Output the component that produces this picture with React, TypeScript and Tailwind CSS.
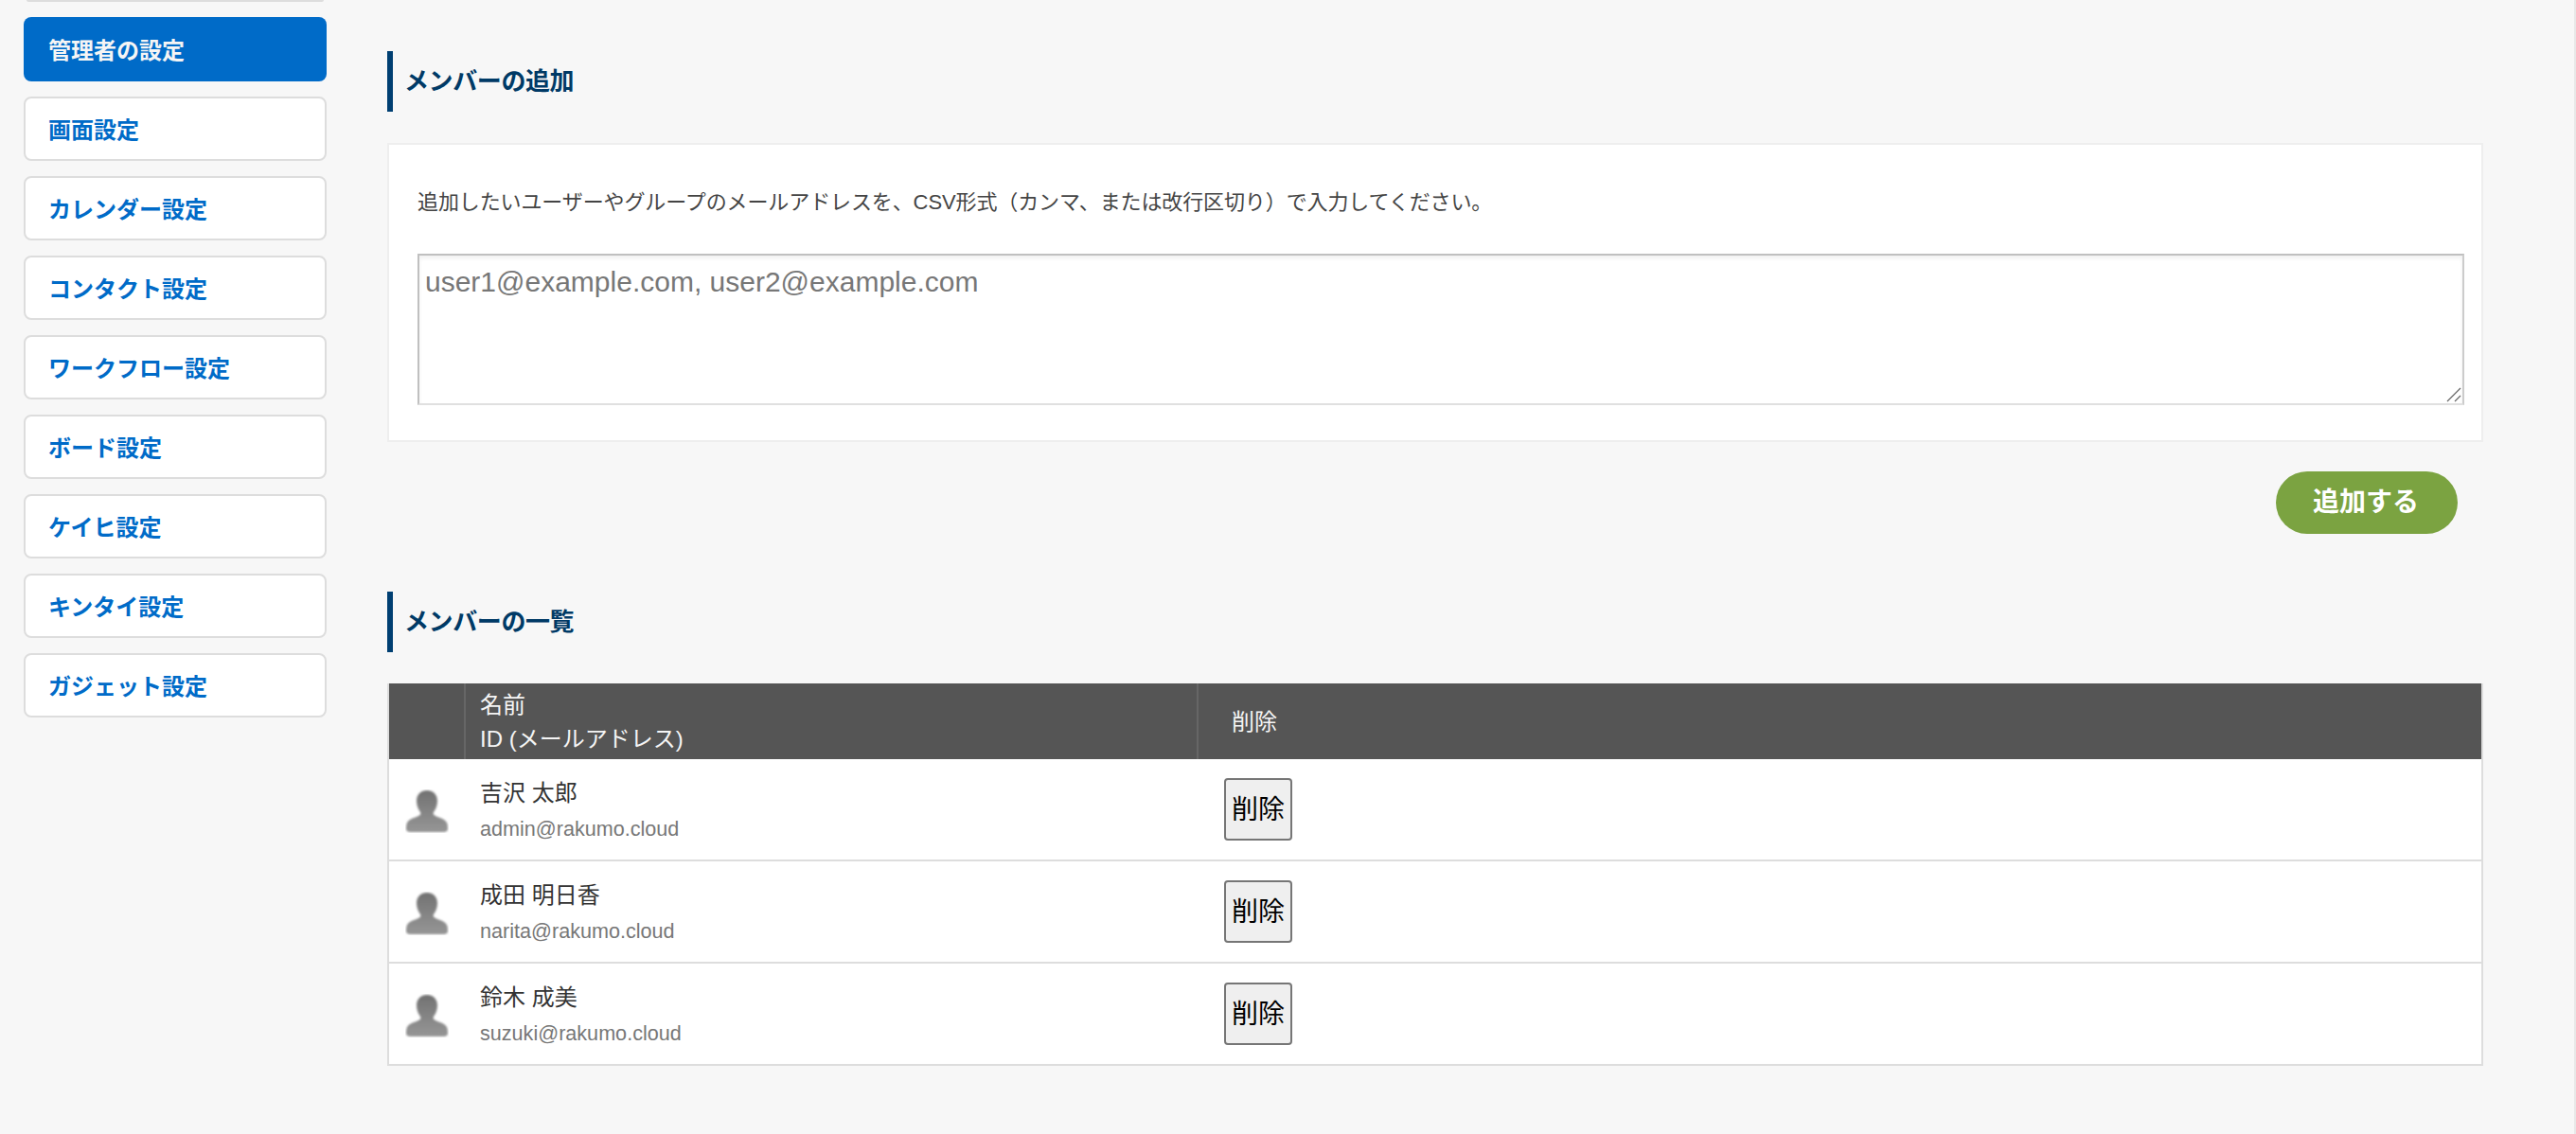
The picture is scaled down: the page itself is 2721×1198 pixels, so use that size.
const font = { fontFamily: '"Liberation Sans","Noto Sans CJK JP",sans-serif' };

const navItems = ["画面設定", "カレンダー設定", "コンタクト設定", "ワークフロー設定", "ボード設定", "ケイヒ設定", "キンタイ設定", "ガジェット設定"];
const members = [
  { name: "吉沢 太郎", email: "admin@rakumo.cloud" },
  { name: "成田 明日香", email: "narita@rakumo.cloud" },
  { name: "鈴木 成美", email: "suzuki@rakumo.cloud" },
];

function Avatar() {
  return (
    <svg width="46" height="46" viewBox="0 0 46 46">
      <defs>
        <linearGradient id="av" x1="0" y1="0" x2="0" y2="1">
          <stop offset="0" stopColor="#727272" />
          <stop offset="1" stopColor="#969696" />
        </linearGradient>
        <filter id="bl" x="-10%" y="-10%" width="120%" height="120%"><feGaussianBlur stdDeviation="0.8" /></filter>
      </defs>
      <path
        filter="url(#bl)"
        fill="url(#av)"
        d="M23 1c6.500 0 11 4.500 11 11 0 5-2 9.500-4 12-1 2 0 3 3 4.500 5 2 10 3 11.500 8 .6 2.500.5 6 .5 6-.5 1.500-2 2.500-4 2.500H5c-2 0-3.500-1-4-2.500 0 0-.1-3.500.5-6C3 31.500 8 30.500 13 28.500c3-1.500 4-2.500 3-4.500-2-2.500-4-7-4-12C12 5.500 16.500 1 23 1z"
      />
    </svg>
  );
}

function Heading({ children }: { children: React.ReactNode }) {
  return (
    <h2 className="h-16 border-l-[6px] border-[#003f72] pl-3 flex items-center text-[26px] font-bold text-[#003a66] tracking-[-0.4px]">
      {children}
    </h2>
  );
}

export default function App() {
  return (
    <div style={font} className="relative flex h-[1198px] overflow-hidden bg-[#f7f7f7] text-[#333]">
      <aside className="w-[409px] shrink-0 pl-[25px] pr-[64px]">
        <div className="h-0.5 mx-[3px] bg-[#dddddd] rounded-b" />
        <nav className="mt-4 flex flex-col gap-4">
          <a className="flex h-[68px] items-center rounded-lg bg-[#006bc8] px-[26px] pt-[3px] text-2xl font-bold text-[#f5f5f5]">管理者の設定</a>
          {navItems.map((item) => (
            <a key={item} className="flex h-[68px] items-center rounded-lg border-2 border-[#dddddd] bg-white px-6 pt-[3px] text-2xl font-bold text-[#006bc8]">
              {item}
            </a>
          ))}
        </nav>
      </aside>
      <main className="w-[2214px] shrink-0 pt-[54px]">
        <Heading>メンバーの追加</Heading>
        <section className="mt-[33px] h-[316px] border-2 border-[#eeeeee] bg-white pl-[30px] pr-[18px] pt-[45px]">
          <p className="text-[22px] leading-8 tracking-[-0.11px] text-[#444]">追加したいユーザーやグループのメールアドレスを、CSV形式（カンマ、または改行区切り）で入力してください。</p>
          <div className="relative mt-[38px]">
            <textarea
              className="block h-[160px] w-full resize-none border-2 border-t-[#c0c0c0] border-l-[#c0c0c0] border-r-[#cccccc] border-b-[#e0e0e0] bg-white px-1.5 pt-2.5 text-[30px] leading-9 shadow-[inset_0_3px_4px_rgba(0,0,0,0.06)] placeholder:text-[#777]"
              placeholder="user1@example.com, user2@example.com"
            />
            <svg className="absolute bottom-[3px] right-[3px]" width="16" height="16" viewBox="0 0 16 16" stroke="#666" strokeWidth="1.2">
              <path d="M1 15 15 1M9 15l6-6" />
            </svg>
          </div>
        </section>
        <div className="mt-[31px] flex justify-end pr-[27px]">
          <button className="h-[66px] w-[192px] rounded-full bg-[#7ba341] pr-0.5 text-[28px] font-bold text-white">追加する</button>
        </div>
        <div className="mt-[61px]">
          <Heading>メンバーの一覧</Heading>
        </div>
        <section className="mt-[33px] border-2 border-t-0 border-[#dddddd] bg-white">
          <div className="flex h-20 bg-[#555555] text-2xl leading-9 text-[#f5f5f5]">
            <div className="w-[81px] border-r-2 border-[#666666]" />
            <div className="flex w-[774px] flex-col justify-center border-r-2 border-[#666666] pl-[15px] pt-px">
              <span>名前</span>
              <span>ID (メールアドレス)</span>
            </div>
            <div className="flex items-center pl-[35px] pt-px">削除</div>
          </div>
          {members.map((m, i) => (
            <div key={m.email} className={`flex items-center ${i < 2 ? "h-[108px] border-b-2 border-[#dddddd]" : "h-[106px]"}`}>
              <div className="flex w-[80px] justify-center pt-1"><Avatar /></div>
              <div className="w-[777px] pl-4 pt-px">
                <div className="text-2xl leading-9 text-[#333]">{m.name}</div>
                <div className="mt-1 text-[21.6px] leading-8 text-[#777]">{m.email}</div>
              </div>
              <button className="ml-[25px] h-[66px] w-[72px] rounded-[4px] border-2 border-[#767676] bg-[#efefef] pt-0.5 text-[28px] text-black">削除</button>
            </div>
          ))}
        </section>
      </main>
      <div className="absolute right-0 top-0 h-full w-0.5 bg-[#e8e8e8]" />
    </div>
  );
}
